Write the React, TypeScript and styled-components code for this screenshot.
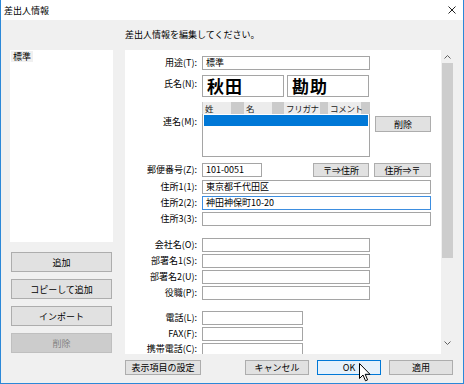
import styled, { createGlobalStyle } from "styled-components";

const GlobalStyle = createGlobalStyle`
    body {
        margin: 0;
        font-family: "Noto Sans CJK JP", "Noto Sans", sans-serif;
        font-size: 9px;
        color: #000;
    }
`;

const Window = styled.div`
    position: relative;
    width: 464px;
    height: 384px;
    box-sizing: border-box;
    border: 1px solid #2b88d8;
    border-top: none;
    background-color: #f0f0f0;
    display: flex;
    flex-direction: column;
    overflow: hidden;
`;

const TitleBar = styled.div`
    height: 20px;
    flex-shrink: 0;
    background-color: #fff;
    display: flex;
    align-items: center;
    justify-content: space-between;
    padding: 0 7px 0 3px;
    font-size: 9px;
`;

const Body = styled.div`
    flex: 1;
    display: flex;
    flex-direction: column;
    padding: 9px 9px 0 9px;
`;

const Lead = styled.div`
    margin-left: 115px;
    height: 12px;
    line-height: 12px;
    margin-bottom: 9px;
`;

const Main = styled.div`
    display: flex;
    gap: 12px;
    height: 304px;
`;

const LeftCol = styled.div`
    width: 103px;
    display: flex;
    flex-direction: column;
`;

const ProfileList = styled.div`
    height: 192px;
    background-color: #fff;
`;

const ProfileItem = styled.span`
    display: inline-block;
    margin: 0 0 0 1px;
    padding: 0 2px;
    line-height: 11px;
    background-color: #f0f0f0;
`;

const SideButtons = styled.div`
    display: flex;
    flex-direction: column;
    gap: 7px;
    margin: 10px 1px 0;
`;

const Button = styled.div<{ $w?: number; $h?: number; $disabled?: boolean; $hover?: boolean }>`
    width: ${(p) => (p.$w ? `${p.$w}px` : "auto")};
    height: ${(p) => p.$h || 20}px;
    box-sizing: border-box;
    display: flex;
    align-items: center;
    justify-content: center;
    flex-shrink: 0;
    background-color: ${(p) => (p.$disabled ? "#cccccc" : p.$hover ? "#e5f1fb" : "#e1e1e1")};
    border: 1px solid ${(p) => (p.$disabled ? "#bfbfbf" : p.$hover ? "#0078d7" : "#adadad")};
    color: ${(p) => (p.$disabled ? "#838383" : "#000")};
`;

const Panel = styled.div`
    flex: 1;
    display: flex;
`;

const Content = styled.div`
    flex: 1;
    background-color: #fff;
    padding-top: 6px;
    overflow: hidden;
`;

const ScrollBar = styled.div`
    position: relative;
    width: 13px;
    background-color: #f0f0f0;
`;

const Thumb = styled.div`
    position: absolute;
    left: 1px;
    top: 13px;
    width: 11px;
    height: 195px;
    background-color: #cdcdcd;
`;

const Arrow = styled.svg<{ $top: number }>`
    position: absolute;
    left: 3px;
    top: ${(p) => p.$top}px;
`;

const Row = styled.div<{ $mt?: number }>`
    display: flex;
    align-items: flex-start;
    margin-top: ${(p) => p.$mt || 0}px;
`;

const Label = styled.div<{ $pt?: number }>`
    width: 72px;
    flex-shrink: 0;
    text-align: right;
    line-height: 10px;
    padding-top: ${(p) => (p.$pt ?? 2)}px;
    margin-right: 5px;
    white-space: nowrap;
`;

const Field = styled.div<{ $w: number; $focus?: boolean }>`
    width: ${(p) => p.$w}px;
    height: 14px;
    box-sizing: border-box;
    border: 1px solid ${(p) => (p.$focus ? "#3d8ee0" : "#a5a5a5")};
    background-color: #fff;
    padding-left: 3px;
    line-height: 12px;
    white-space: nowrap;
    overflow: hidden;
    flex-shrink: 0;
`;

const NameBox = styled.div`
    width: 82px;
    height: 22px;
    box-sizing: border-box;
    border: 1px solid #a5a5a5;
    padding-left: 4px;
    font-size: 17px;
    font-weight: 700;
    line-height: 20px;
    letter-spacing: 1px;
`;

const NameGroup = styled.div`
    display: flex;
    gap: 3px;
`;

const ColHeader = styled.div`
    width: 168px;
    height: 12px;
    display: flex;
    background-color: #cbcbcb;
`;

const ColCell = styled.div<{ $w: number }>`
    width: ${(p) => p.$w}px;
    display: flex;
`;

const ColText = styled.span<{ $w: number }>`
    width: ${(p) => p.$w}px;
    background-color: #ececec;
    padding-left: 2px;
    box-sizing: border-box;
    line-height: 12px;
    font-size: 8.5px;
    letter-spacing: -0.3px;
    white-space: nowrap;
    color: #222;
    margin-left: 1px;
`;

const NameList = styled.div`
    width: 168px;
    height: 43px;
    box-sizing: border-box;
    border: 1px solid #a5a5a5;
    border-top: none;
    padding: 1px 1px 0;
`;

const Selected = styled.div`
    height: 11px;
    background-color: #0078d7;
`;

const Footer = styled.div`
    display: flex;
    align-items: center;
    margin-top: 6px;
    padding: 0 1px 0 115px;
`;

const ButtonGroup = styled.div`
    display: flex;
    gap: 8px;
    margin-left: auto;
`;

const Cursor = styled.svg`
    position: absolute;
    left: 358px;
    top: 363px;
`;

const columns = [
    { label: "姓", w: 41, lw: 28 },
    { label: "名", w: 40, lw: 28 },
    { label: "フリガナ", w: 44, lw: 36 },
    { label: "コメント", w: 43, lw: 33 },
];

function App() {
    return (
        <>
            <GlobalStyle />
            <Window>
                <TitleBar>
                    <span>差出人情報</span>
                    <svg width="8" height="8" viewBox="0 0 8 8">
                        <path d="M0.5 0.5 L7.5 7.5 M7.5 0.5 L0.5 7.5" stroke="#222" strokeWidth="1" />
                    </svg>
                </TitleBar>
                <Body>
                    <Lead>差出人情報を編集してください。</Lead>
                    <Main>
                        <LeftCol>
                            <ProfileList>
                                <ProfileItem>標準</ProfileItem>
                            </ProfileList>
                            <SideButtons>
                                <Button>追加</Button>
                                <Button>コピーして追加</Button>
                                <Button>インポート</Button>
                                <Button $disabled>削除</Button>
                            </SideButtons>
                        </LeftCol>
                        <Panel>
                            <Content>
                                <Row>
                                    <Label>用途(T):</Label>
                                    <Field $w={168}>標準</Field>
                                </Row>
                                <Row $mt={5}>
                                    <Label $pt={4}>氏名(N):</Label>
                                    <NameGroup>
                                        <NameBox>秋田</NameBox>
                                        <NameBox>勘助</NameBox>
                                    </NameGroup>
                                </Row>
                                <Row $mt={5}>
                                    <Label />
                                    <ColHeader>
                                        {columns.map((c) => (
                                            <ColCell key={c.label} $w={c.w}>
                                                <ColText $w={c.lw}>{c.label}</ColText>
                                            </ColCell>
                                        ))}
                                    </ColHeader>
                                </Row>
                                <Row>
                                    <Label $pt={3}>連名(M):</Label>
                                    <NameList>
                                        <Selected />
                                    </NameList>
                                    <Button $w={56} $h={16} style={{ marginLeft: 5, marginTop: 2 }}>
                                        削除
                                    </Button>
                                </Row>
                                <Row $mt={6}>
                                    <Label>郵便番号(Z):</Label>
                                    <Field $w={60}>101-0051</Field>
                                    <ButtonGroup style={{ marginLeft: 51, gap: 5 }}>
                                        <Button $w={56} $h={14}>〒⇒住所</Button>
                                        <Button $w={57} $h={14}>住所⇒〒</Button>
                                    </ButtonGroup>
                                </Row>
                                <Row $mt={3}>
                                    <Label>住所1(1):</Label>
                                    <Field $w={229}>東京都千代田区</Field>
                                </Row>
                                <Row $mt={2}>
                                    <Label>住所2(2):</Label>
                                    <Field $w={229} $focus>神田神保町10-20</Field>
                                </Row>
                                <Row $mt={2}>
                                    <Label>住所3(3):</Label>
                                    <Field $w={229} />
                                </Row>
                                <Row $mt={12}>
                                    <Label>会社名(O):</Label>
                                    <Field $w={168} />
                                </Row>
                                <Row $mt={2}>
                                    <Label>部署名1(S):</Label>
                                    <Field $w={168} />
                                </Row>
                                <Row $mt={2}>
                                    <Label>部署名2(U):</Label>
                                    <Field $w={168} />
                                </Row>
                                <Row $mt={2}>
                                    <Label>役職(P):</Label>
                                    <Field $w={168} />
                                </Row>
                                <Row $mt={11}>
                                    <Label>電話(L):</Label>
                                    <Field $w={101} />
                                </Row>
                                <Row $mt={2}>
                                    <Label>FAX(F):</Label>
                                    <Field $w={101} />
                                </Row>
                                <Row $mt={2}>
                                    <Label $pt={1}>携帯電話(C):</Label>
                                    <Field $w={101} />
                                </Row>
                            </Content>
                            <ScrollBar>
                                <Arrow $top={5} width="7" height="4" viewBox="0 0 7 4">
                                    <path d="M0.5 3.5 L3.5 0.5 L6.5 3.5" fill="none" stroke="#606060" strokeWidth="1" />
                                </Arrow>
                                <Thumb />
                                <Arrow $top={291} width="7" height="4" viewBox="0 0 7 4">
                                    <path d="M0.5 0.5 L3.5 3.5 L6.5 0.5" fill="none" stroke="#606060" strokeWidth="1" />
                                </Arrow>
                            </ScrollBar>
                        </Panel>
                    </Main>
                    <Footer>
                        <Button $w={76} $h={15}>表示項目の設定</Button>
                        <ButtonGroup>
                            <Button $w={64} $h={15}>キャンセル</Button>
                            <Button $w={64} $h={15} $hover>OK</Button>
                            <Button $w={64} $h={15}>適用</Button>
                        </ButtonGroup>
                    </Footer>
                </Body>
                <Cursor width="12" height="19" viewBox="0 0 12 19">
                    <path
                        d="M0.5 0.5 L0.5 15.5 L4 12 L6.5 17.8 L8.6 16.9 L6.2 11.3 L11 11.3 Z"
                        fill="#fff"
                        stroke="#000"
                        strokeWidth="1"
                        strokeLinejoin="round"
                    />
                </Cursor>
            </Window>
        </>
    );
}

export default App;
